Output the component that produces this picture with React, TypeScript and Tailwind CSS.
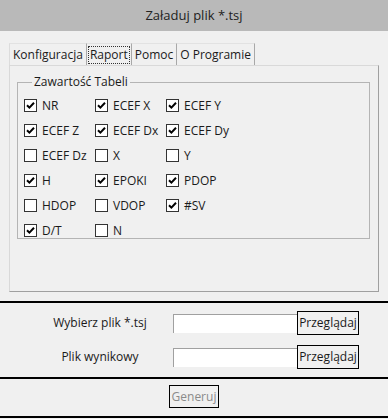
import { useState } from 'react';

type Item = { label: string; checked: boolean };

const initialItems: Item[] = [
  { label: 'NR', checked: true },
  { label: 'ECEF X', checked: true },
  { label: 'ECEF Y', checked: true },
  { label: 'ECEF Z', checked: true },
  { label: 'ECEF Dx', checked: true },
  { label: 'ECEF Dy', checked: true },
  { label: 'ECEF Dz', checked: false },
  { label: 'X', checked: false },
  { label: 'Y', checked: false },
  { label: 'H', checked: true },
  { label: 'EPOKI', checked: true },
  { label: 'PDOP', checked: true },
  { label: 'HDOP', checked: false },
  { label: 'VDOP', checked: false },
  { label: '#SV', checked: true },
  { label: 'D/T', checked: true },
  { label: 'N', checked: false },
];

const tabs = ['Konfiguracja', 'Raport', 'Pomoc', 'O Programie'];

const CheckBox = ({ item, onToggle }: { item: Item; onToggle: () => void }) => (
  <button type="button" onClick={onToggle} className="flex items-center h-[25px] text-left">
    <span className="w-[13px] h-[13px] border border-[#333333] bg-white flex items-center justify-center shrink-0">
      {item.checked && (
        <svg className="w-[9px] h-[9px]" viewBox="0 0 9 9">
          <path d="M1 4.2L3.4 6.6L8 1.8" fill="none" stroke="#000" strokeWidth={2} />
        </svg>
      )}
    </span>
    <span className="ml-[5px] text-[#1a1a1a]">{item.label}</span>
  </button>
);

export default function App() {
  const [items, setItems] = useState<Item[]>(initialItems);
  const [active, setActive] = useState(1);
  const [inFile, setInFile] = useState('');
  const [outFile, setOutFile] = useState('');

  const toggle = (i: number) => {
    const next = [...items];
    next[i] = { ...next[i], checked: !next[i].checked };
    setItems(next);
  };

  return (
    <div
      className="w-[388px] h-[419px] bg-[#f0f0f0] text-[12px] text-[#1a1a1a] flex flex-col overflow-hidden"
      style={{ fontFamily: '"Open Sans", "Noto Sans", sans-serif' }}
    >
      <div className="h-[31px] shrink-0 bg-[#b9b9b9] flex items-center justify-center text-[13px] text-[#222222]">
        Załaduj plik *.tsj
      </div>

      <div className="mt-[12px] ml-[9px] flex h-[22px] shrink-0">
        {tabs.map((t, i) => (
          <button
            key={t}
            type="button"
            onClick={() => setActive(i)}
            className={`h-[22px] px-[2px] flex items-center border-r border-[#a8a8a8] ${i === 0 ? 'border-l border-l-[#dcdcdc]' : ''} border-t border-t-[#e2e2e2]`}
          >
            <span
              className={`px-[1px] leading-[16px] ${i === active ? 'outline outline-1 outline-dotted outline-[#333333]' : ''}`}
            >
              {t}
            </span>
          </button>
        ))}
      </div>

      <div className="ml-[9px] w-[370px] h-[227px] shrink-0 border border-[#d9d9d9] border-r-[#a0a0a0] border-b-[#a0a0a0] pl-[7px] pt-[9px]">
        {active === 1 && (
          <fieldset className="w-[353px] h-[164px] border border-[#b4b4b4] pl-[6px] pt-[4px]">
            <legend className="ml-[8px] px-[2px] leading-[14px]">Zawartość Tabeli</legend>
            <div className="grid grid-cols-[71px_71px_71px]">
              {items.map((it, i) => (
                <CheckBox key={it.label} item={it} onToggle={() => toggle(i)} />
              ))}
            </div>
          </fieldset>
        )}
      </div>

      <div className="mt-[9px] h-[2px] shrink-0 bg-black" />

      <div className="h-[74px] shrink-0 pt-[8px] flex flex-col gap-[10px]">
        <div className="flex items-center h-[24px]">
          <div className="w-[173px] pl-[27px] text-center">Wybierz plik *.tsj</div>
          <input
            value={inFile}
            onChange={(e) => setInFile(e.target.value)}
            className="w-[124px] h-[19px] bg-white border-t border-l border-[#a0a0a0] outline-none px-1"
          />
          <button type="button" className="w-[62px] h-[24px] border border-black bg-[#f0f0f0]">
            Przeglądaj
          </button>
        </div>
        <div className="flex items-center h-[24px]">
          <div className="w-[173px] pl-[27px] text-center">Plik wynikowy</div>
          <input
            value={outFile}
            onChange={(e) => setOutFile(e.target.value)}
            className="w-[124px] h-[19px] bg-white border-t border-l border-[#a0a0a0] outline-none px-1"
          />
          <button type="button" className="w-[62px] h-[24px] border border-black bg-[#f0f0f0]">
            Przeglądaj
          </button>
        </div>
      </div>

      <div className="h-[2px] shrink-0 bg-black" />

      <div className="h-[37px] shrink-0 flex justify-center pt-[6px]">
        <button type="button" disabled className="w-[50px] h-[23px] border border-black text-[#8a8a8a]">
          Generuj
        </button>
      </div>

      <div className="h-[2px] shrink-0 bg-black" />
    </div>
  );
}
